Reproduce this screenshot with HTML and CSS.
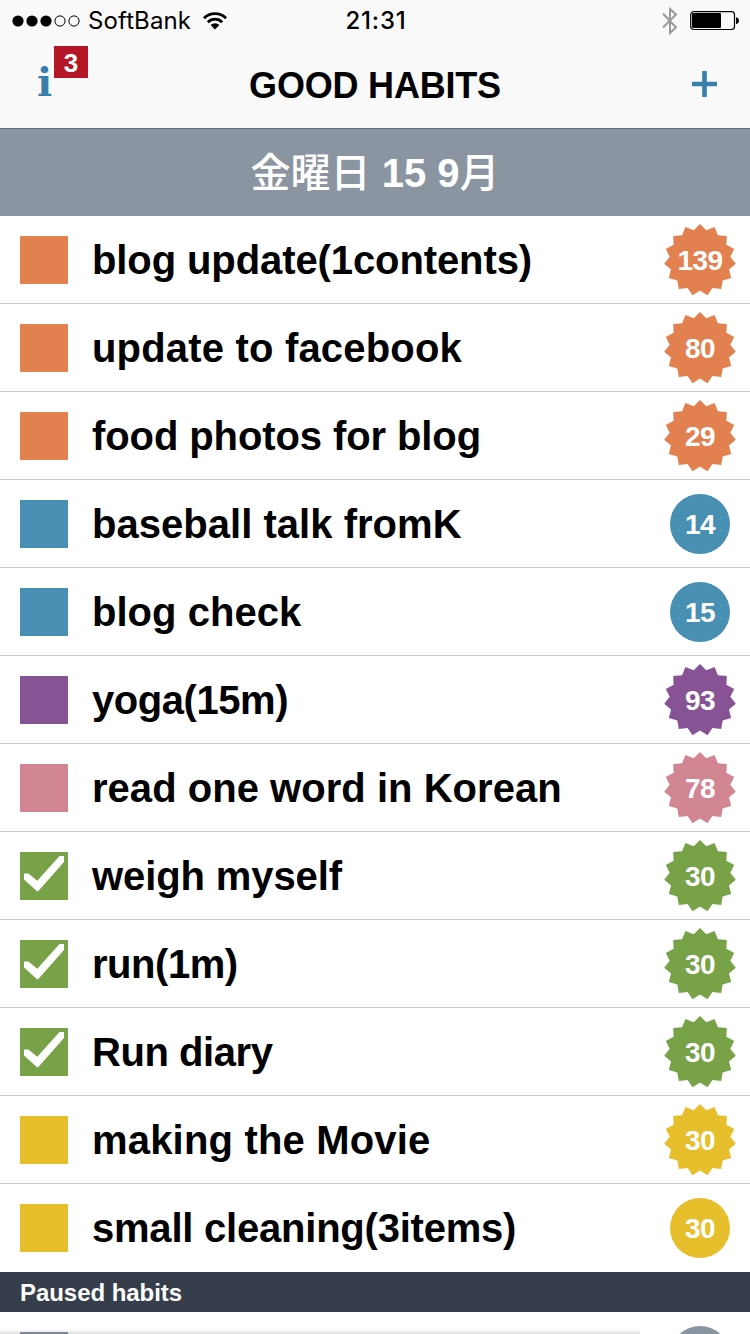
FILE: index.html
```html
<!DOCTYPE html>
<html lang="ja">
<head>
    <meta charset="UTF-8">
    <meta name="viewport" content="width=device-width, initial-scale=1.0">
    <title>Good Habits</title>
    <link rel="stylesheet" href="styles.css">
</head>
<body>

    <!-- Shared shapes -->
    <svg class="shapes" width="0" height="0">
        <symbol id="star" viewBox="0 0 72 72">
            <polygon points="36,0 42.3,6.2 50.6,3.1 53.9,11.3 62.8,11.9 62.4,20.8 70.2,24.9 66.3,32.8 71.8,39.8 65,45.4 67.2,54 58.7,56.4 57.2,65.1 48.4,63.9 43.5,71.2 36,66.5 28.5,71.2 23.6,63.9 14.8,65.1 13.3,56.4 4.8,54 7,45.4 0.2,39.8 5.7,32.8 1.8,24.9 9.6,20.8 9.2,11.9 18.1,11.3 21.4,3.1 29.7,6.2"/>
        </symbol>
        <symbol id="circle" viewBox="0 0 72 72">
            <circle cx="36" cy="36" r="30"/>
        </symbol>
        <symbol id="check" viewBox="0 0 48 48">
            <path d="M4 21.600H8.400L17.300 28.800 39.500 4H44V10L17.700 39.700 4 27.500z"/>
        </symbol>
    </svg>

    <!-- Status Bar -->
    <div class="status-bar">
        <div class="carrier">
            <svg width="68" height="12" viewBox="0 0 68 12">
                <circle cx="6" cy="6" r="5.600"/>
                <circle cx="20" cy="6" r="5.600"/>
                <circle cx="34" cy="6" r="5.600"/>
                <circle cx="48" cy="6" r="5.100" fill="none" stroke="#000"/>
                <circle cx="62" cy="6" r="5.100" fill="none" stroke="#000"/>
            </svg>
            <span class="carrier-name">SoftBank</span>
            <svg width="24" height="18" viewBox="0 0 24 18">
                <path d="M1 6.200a15.500 15.500 0 0 1 22 0M4.800 10.200a10.200 10.200 0 0 1 14.400 0" fill="none" stroke="#000" stroke-width="2.800"/>
                <path d="M7.600 13.100a6.200 6.200 0 0 1 8.800 0L12 17.600z"/>
            </svg>
        </div>
        <span class="clock">21:31</span>
        <div class="battery">
            <svg width="16" height="28" viewBox="0 0 16 28">
                <path d="M1 6.500 14 20.500 8 26V2l6 5.500L1 20.500" fill="none" stroke="#999" stroke-width="2"/>
            </svg>
            <svg width="50" height="20" viewBox="0 0 50 20">
                <rect x="0.700" y="0.700" width="43.800" height="17.800" rx="3" fill="none" stroke="#000" stroke-width="1.200"/>
                <rect x="2" y="2" width="29" height="15" rx="1"/>
                <path d="M46 6.200c4 .5 4 6.300 0 6.800z"/>
            </svg>
        </div>
    </div>

    <!-- Navigation -->
    <div class="nav">
        <div class="info">i<span class="info-count">3</span></div>
        <h1>GOOD HABITS</h1>
        <svg class="add" width="25" height="26" viewBox="0 0 25 26">
            <path d="M12.500 0v26M0 13h25" fill="none" stroke="#3a7fab" stroke-width="4.600"/>
        </svg>
    </div>

    <h2 class="date"><span>金曜日</span> 15 9<span>月</span></h2>

    <!-- Habits -->
    <ul class="habits">
        <li class="orange"><span class="box"></span><span class="name">blog update(1contents)</span><span class="badge"><svg><use href="#star"/></svg><b>139</b></span></li>
        <li class="orange"><span class="box"></span><span class="name wide">update to facebook</span><span class="badge"><svg><use href="#star"/></svg><b>80</b></span></li>
        <li class="orange"><span class="box"></span><span class="name">food photos for blog</span><span class="badge"><svg><use href="#star"/></svg><b>29</b></span></li>
        <li class="blue"><span class="box"></span><span class="name normal">baseball talk fromK</span><span class="badge"><svg><use href="#circle"/></svg><b>14</b></span></li>
        <li class="blue"><span class="box"></span><span class="name normal">blog check</span><span class="badge"><svg><use href="#circle"/></svg><b>15</b></span></li>
        <li class="purple"><span class="box"></span><span class="name tight">yoga(15m)</span><span class="badge"><svg><use href="#star"/></svg><b>93</b></span></li>
        <li class="pink"><span class="box"></span><span class="name normal">read one word in Korean</span><span class="badge"><svg><use href="#star"/></svg><b>78</b></span></li>
        <li class="green"><span class="box"><svg><use href="#check"/></svg></span><span class="name">weigh myself</span><span class="badge"><svg><use href="#star"/></svg><b>30</b></span></li>
        <li class="green"><span class="box"><svg><use href="#check"/></svg></span><span class="name tight">run(1m)</span><span class="badge"><svg><use href="#star"/></svg><b>30</b></span></li>
        <li class="green"><span class="box"><svg><use href="#check"/></svg></span><span class="name tight">Run diary</span><span class="badge"><svg><use href="#star"/></svg><b>30</b></span></li>
        <li class="yellow"><span class="box"></span><span class="name wide">making the Movie</span><span class="badge"><svg><use href="#star"/></svg><b>30</b></span></li>
        <li class="yellow"><span class="box"></span><span class="name snug">small cleaning(3items)</span><span class="badge"><svg><use href="#circle"/></svg><b>30</b></span></li>
    </ul>

    <h3 class="paused-title">Paused habits</h3>
    <ul class="habits paused">
        <li class="grey"><span class="box"></span><span class="name"></span><span class="badge"><svg><use href="#circle"/></svg></span></li>
    </ul>

    <!-- Soft shadow along the bottom edge -->
    <div class="bottom-shadow"></div>

</body>
</html>
```
FILE: styles.css
```css
* {
    box-sizing: border-box;
}

body {
    margin: 0;
    height: 1334px;
    position: relative;
    overflow: hidden;
    background-color: #fff;
    color: #000;
    font-family: "Liberation Sans", "Noto Sans CJK JP", sans-serif;
}

svg {
    display: block;
}

.shapes {
    position: absolute;
}

/* Status Bar */
.status-bar {
    display: grid;
    grid-template-columns: 1fr auto 1fr;
    align-items: center;
    height: 40px;
    padding: 1px 10px 0 12px;
    background-color: #f9f9f9;
    font-family: Inter, sans-serif;
    font-size: 24px;
}

.carrier {
    display: flex;
    align-items: center;
}

.carrier-name {
    margin: 0 12px 0 8px;
    letter-spacing: 0.1px;
}

.clock {
    font-weight: 500;
    letter-spacing: 0.8px;
}

.battery {
    display: flex;
    align-items: center;
    justify-content: flex-end;
    gap: 12px;
}

/* Navigation */
.nav {
    display: grid;
    grid-template-columns: 100px 1fr 100px;
    align-items: center;
    height: 89px;
    background-color: #f9f9f9;
    border-bottom: 1px solid #616b79;
}

.nav h1 {
    margin: 4px 0 0;
    text-align: center;
    font-size: 36px;
    letter-spacing: -0.2px;
    line-height: 40px;
}

.info {
    position: relative;
    padding: 0 0 4px 37px;
    color: #3a7fab;
    font-family: "DejaVu Serif", serif;
    font-size: 40px;
    font-weight: bold;
    line-height: 52px;
}

.info-count {
    position: absolute;
    left: 54px;
    top: -10px;
    width: 34px;
    height: 32px;
    background-color: #b31625;
    color: #fff;
    font-family: "Liberation Sans", sans-serif;
    font-size: 26px;
    line-height: 34px;
    text-align: center;
}

.add {
    justify-self: end;
    margin: 0 33px 1px 0;
}

.date {
    margin: 0;
    height: 87px;
    background-color: #8b95a1;
    color: #fff;
    font-size: 40px;
    line-height: 89px;
    text-align: center;
}

.date span {
    font-weight: 500;
}

/* Habit rows */
.habits {
    margin: 0;
    padding: 0;
    list-style: none;
}

.habits li {
    display: flex;
    align-items: center;
    height: 88px;
    padding: 0 14px 0 20px;
    border-bottom: 1px solid #c8c8c8;
}

.habits li:last-child {
    border-bottom-color: transparent;
}

/* Only the top of the first paused row is on screen */
.paused {
    height: 22px;
    overflow: hidden;
}

.box {
    width: 48px;
    height: 48px;
    background-color: var(--color);
}

.box svg {
    width: 48px;
    height: 48px;
    fill: #fff;
}

.name {
    flex: 1;
    margin-left: 24px;
    padding-top: 1px;
    font-size: 40px;
    font-weight: bold;
    letter-spacing: -0.1px;
    line-height: 48px;
    white-space: nowrap;
}

.name.normal {
    letter-spacing: 0.03px;
}

.name.wide {
    letter-spacing: 0.18px;
}

.name.snug {
    letter-spacing: -0.22px;
}

.name.tight {
    letter-spacing: -0.45px;
}

.badge {
    display: grid;
    place-items: center;
}

.badge svg,
.badge b {
    grid-area: 1 / 1;
}

.badge svg {
    width: 72px;
    height: 72px;
    fill: var(--color);
}

.badge b {
    padding-top: 2px;
    color: #fff;
    font-size: 28px;
    letter-spacing: -0.5px;
}

.orange { --color: #e28050; }
.blue { --color: #488fb4; }
.purple { --color: #875394; }
.pink { --color: #d28592; }
.green { --color: #77a247; }
.yellow { --color: #e7bf2c; }
.grey { --color: #8b95a1; }

.paused-title {
    margin: 0;
    height: 40px;
    padding-left: 20px;
    background-color: #353e4a;
    color: #fff;
    font-size: 24px;
    letter-spacing: -0.05px;
    line-height: 41px;
}

.bottom-shadow {
    position: absolute;
    left: 0;
    bottom: 0;
    width: 640px;
    height: 5px;
    background: linear-gradient(to bottom, rgba(0, 0, 0, 0), rgba(0, 0, 0, 0.12));
}
```
